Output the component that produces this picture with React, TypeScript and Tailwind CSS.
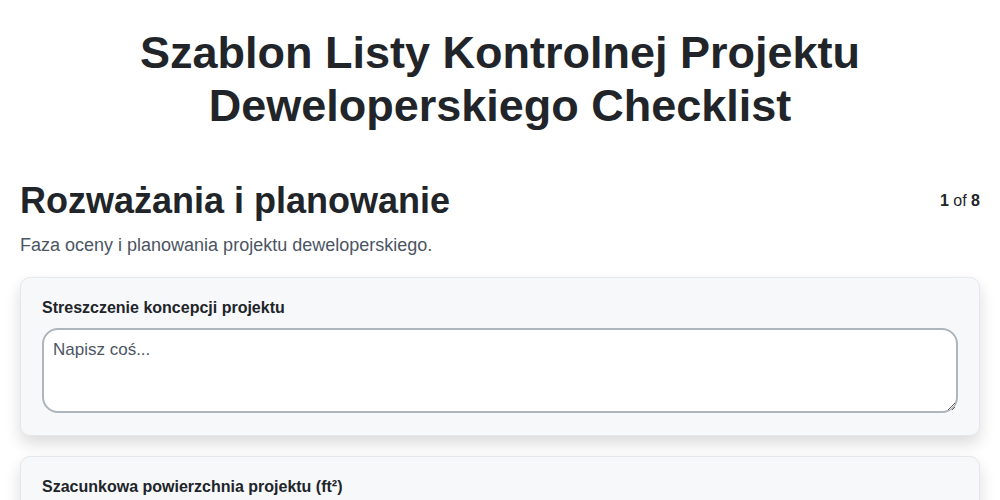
export default function App() {
  return (
    <div className="min-h-screen bg-white font-['Liberation_Sans',Arial,sans-serif] text-[#212529]">
      <div className="mx-auto max-w-[1000px] px-5">
        {/* Page title */}
        <h1 className="pt-[26px] text-center text-[45px] font-bold leading-[53px]">
          Szablon Listy Kontrolnej Projektu
          <br />
          Deweloperskiego Checklist
        </h1>

        {/* Section header */}
        <div className="mt-[47px] flex items-start justify-between">
          <h2 className="text-[36px] font-bold leading-[44px]">Rozważania i planowanie</h2>
          <div className="pt-[10px] text-base">
            <span className="font-bold">1</span> of <span className="font-bold">8</span>
          </div>
        </div>
        <p className="mt-[10px] text-[18px] leading-6 text-[#4b5563]">Faza oceny i planowania projektu deweloperskiego.</p>

        {/* Fields */}
        <div className="mt-[20px] flex flex-col gap-5">
          <div className="rounded-[10px] border border-[#e5e7eb] bg-[#f7f8fa] px-[21px] pb-[22px] pt-[20px] shadow-[0_8px_16px_rgba(0,0,0,0.14)]">
            <label className="block text-base font-bold leading-[20px]">Streszczenie koncepcji projektu</label>
            <textarea
              placeholder="Napisz coś..."
              className="mt-[10px] block h-[85px] w-full rounded-2xl border-2 border-[#adb5bd] bg-white px-[9px] py-[7px] text-[17px] placeholder:text-[#4b5563]"
            />
          </div>
          <div className="rounded-[10px] border border-[#e5e7eb] bg-[#f7f8fa] px-[21px] pb-[22px] pt-[20px] shadow-[0_8px_16px_rgba(0,0,0,0.14)]">
            <label className="block text-base font-bold leading-[20px]">Szacunkowa powierzchnia projektu (ft²)</label>
            <input
              type="number"
              className="mt-[10px] block h-[44px] w-full rounded-2xl border-2 border-[#adb5bd] bg-white px-[9px] text-[17px]"
            />
          </div>
        </div>
      </div>
    </div>
  );
}
